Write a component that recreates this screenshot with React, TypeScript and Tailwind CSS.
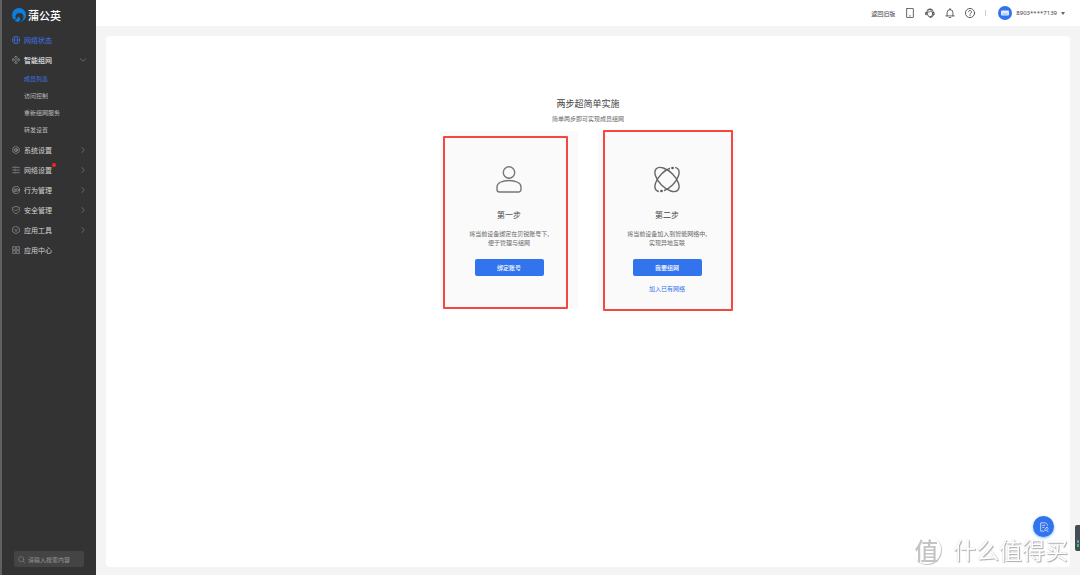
import React from "react";

type IconProps = { className?: string; children: React.ReactNode };

function Icon({ className = "size-2", children }: IconProps) {
  return (
    <svg viewBox="0 0 24 24" fill="none" stroke="currentColor" strokeWidth="2" strokeLinecap="round" strokeLinejoin="round" className={`shrink-0 ${className}`} aria-hidden="true">
      {children}
    </svg>
  );
}

const icons = {
  globe: (
    <>
      <circle cx="12" cy="12" r="11" />
      <ellipse cx="12" cy="12" rx="5" ry="11" />
      <path d="M1 12h22" />
    </>
  ),
  mesh: (
    <>
      <rect x="8.5" y="1" width="7" height="6" rx="2" />
      <rect x="8.5" y="17" width="7" height="6" rx="2" />
      <rect x="1" y="9" width="6" height="6" rx="2" />
      <rect x="17" y="9" width="6" height="6" rx="2" />
      <path d="M12 11v2" />
    </>
  ),
  system: (
    <>
      <path d="M12 1l9.500 5.500v11L12 23l-9.500-5.500v-11z" />
      <circle cx="12" cy="12" r="5" />
      <circle cx="12" cy="12" r="1" />
    </>
  ),
  network: <path d="M2 4h5M12 4h10M2 12h6M14 12h8M2 20h5M12 20h10M9 2v4M11 10v4M9 18v4" />,
  behavior: (
    <>
      <circle cx="12" cy="12" r="11" />
      <path d="M5 9h7M5 13h5M5 17h7" />
      <circle cx="16" cy="12" r="4" />
    </>
  ),
  shield: (
    <>
      <path d="M12 1c3 2 6 3 10 3v8c0 6-5 9-10 11C7 21 2 18 2 12V4c4 0 7-1 10-3z" />
      <path d="M7.500 11l4 4 6-6" />
    </>
  ),
  tool: (
    <>
      <path d="M12 1l10 5.500v11L12 23 2 17.500v-11z" />
      <path d="M8 10l4 3 4-3M12 13v4" />
    </>
  ),
  apps: (
    <>
      <path d="M2 10V2h8v8zM14 10V2h8v8z" />
      <path d="M2 22v-8h8v8zM14 22v-8h8v8z" />
    </>
  ),
};

const subMenu = ["成员列表", "访问控制", "重新组网服务", "转发设置"];

const menu = [
  { label: "系统设置", icon: icons.system, arrow: true },
  { label: "网络设置", icon: icons.network, arrow: true, dot: true },
  { label: "行为管理", icon: icons.behavior, arrow: true },
  { label: "安全管理", icon: icons.shield, arrow: true },
  { label: "应用工具", icon: icons.tool, arrow: true },
  { label: "应用中心", icon: icons.apps },
];

function Sidebar() {
  return (
    <aside className="flex w-24 shrink-0 flex-col border-l-2 border-[#606060] bg-[#333333] text-[#d2d2d2]">
      <div className="flex h-[30px] items-center gap-[2px] pl-[10px]">
        <svg viewBox="0 0 28 28" className="size-[14px] shrink-0" aria-hidden="true">
          <circle cx="14" cy="14" r="14" fill="#0b7fe0" />
          <path d="M14 28a8 8 0 0 0 6-3c2-2 3-4.500 3-7a8 8 0 0 0-16 0c0 1.500.4 3 1 4-2 0-4 .5-5.500 1.500L7 28z" fill="#333333" />
          <path d="M5 25c4-2 6.500-5 7-8 3 1 5 4 4 7-1 2.500-3 4-5 4z" fill="#0b7fe0" />
        </svg>
        <span className="text-[11px] leading-none font-medium text-white">蒲公英</span>
      </div>
      <nav className="text-[7px] leading-none">
        <a href="#" className="flex h-5 items-center gap-1 pl-[10px] text-[#3f74e8]">
          <Icon>{icons.globe}</Icon>
          网络状态
        </a>
        <a href="#" className="flex h-5 items-center gap-1 pr-[10px] pl-[10px] text-white">
          <Icon className="size-2 text-[#999999]">{icons.mesh}</Icon>
          <span className="flex-1">智能组网</span>
          <Icon className="size-[6px] text-[#999999]">
            <path d="M1 7l11 10L23 7" />
          </Icon>
        </a>
        <div className="pb-[2px] text-[6px]">
          {subMenu.map((label, i) => (
            <a key={label} href="#" className={`flex h-[17px] items-center pl-[22px] ${i === 0 ? "text-[#3f74e8]" : "text-[#bcbcbc]"}`}>
              {label}
            </a>
          ))}
        </div>
        {menu.map((item) => (
          <a key={item.label} href="#" className="flex h-5 items-center gap-1 pr-[10px] pl-[10px]">
            <Icon className="size-2 text-[#999999]">{item.icon}</Icon>
            <span className="relative">
              {item.label}
              {item.dot && <i className="absolute -top-1 -right-1 size-1 rounded-full bg-[#f5222d]" />}
            </span>
            {item.arrow && (
              <Icon className="ml-auto size-[6px] text-[#999999]">
                <path d="M8 2l9 10-9 10" />
              </Icon>
            )}
          </a>
        ))}
      </nav>
      <label className="mx-3 mt-auto mb-2 flex h-4 items-center gap-[3px] rounded-xs bg-[#444444] px-1 text-[#888888]">
        <Icon className="size-[7px]">
          <circle cx="11" cy="11" r="9" />
          <path d="M18 18l5 5" />
        </Icon>
        <input type="text" aria-label="搜索" placeholder="请输入搜索内容" className="h-4 w-full min-w-0 text-[6px] placeholder:text-[#999999] focus:outline-none" />
      </label>
    </aside>
  );
}

function Header() {
  return (
    <header className="flex h-[26px] shrink-0 items-center justify-end gap-[10px] bg-white pr-[15px] text-[6px] text-[#444444]">
      <a href="#">返回旧版</a>
      <button type="button" aria-label="手机端">
        <Icon className="size-[10px]">
          <rect x="4" y="1" width="16" height="22" rx="1" />
          <path d="M11 19h2" />
        </Icon>
      </button>
      <button type="button" aria-label="客服">
        <Icon className="size-[10px]">
          <path d="M4 10a8 8 0 0 1 16 0M8 5c2-2 6-2 8 0" />
          <path d="M2 11h2v5H2zM20 11h2v5h-2z" />
          <path d="M6 10c4 0 6-1 8-3 1 2 2 3 4 3v5a6 6 0 0 1-12 0zM20 17c-1 4-4 6-8 6" />
        </Icon>
      </button>
      <button type="button" aria-label="通知">
        <Icon className="size-[10px]">
          <path d="M2 19h20M5 19v-8a7 7 0 0 1 14 0v8M12 4V1M10 23h4" />
        </Icon>
      </button>
      <button type="button" aria-label="帮助">
        <Icon className="size-[10px]">
          <circle cx="12" cy="12" r="11" />
          <path d="M8.500 9a3.500 3.500 0 1 1 5.500 3c-1.500 1-2 1.500-2 3M12 18v.5" />
        </Icon>
      </button>
      <span className="h-[6px] w-px bg-[#cccccc]" />
      <button type="button" className="ml-[2px] flex items-center gap-1">
        <svg viewBox="0 0 28 28" className="size-[14px]" aria-hidden="true">
          <circle cx="14" cy="14" r="14" fill="#3273ee" />
          <rect x="6" y="9" width="16" height="10" rx="2" fill="#e4edff" />
          <path d="M9 16h10" stroke="#8db1f8" strokeWidth="2" />
        </svg>
        <span className="font-['Noto_Sans',sans-serif]">8903****7139</span>
        <svg viewBox="0 0 8 6" className="w-1" aria-hidden="true">
          <path d="M0 0h8L4 6z" fill="#666666" />
        </svg>
      </button>
    </header>
  );
}

type StepProps = { icon: React.ReactNode; title: string; lines: string[]; action: string; link?: string; frame: string };

function Step({ icon, title, lines, action, link, frame }: StepProps) {
  return (
    <section className="relative flex h-[178px] w-[138px] flex-col items-center bg-[#fafafa] pt-[34px] text-[6px] text-[#666666]">
      <div className={`pointer-events-none absolute rounded-[1px] border-2 border-[#f5473f] ${frame}`} />
      {icon}
      <h2 className="mt-4 text-[8px] leading-[12px] text-[#444444]">{title}</h2>
      <p className="mt-2 text-center leading-[9px]">
        {lines[0]}
        <br />
        {lines[1]}
      </p>
      <button type="button" className="mt-3 h-[17px] w-[69px] rounded-xs bg-[#3273ee] font-medium text-white">
        {action}
      </button>
      {link && (
        <a href="#" className="mt-2 leading-[9px] text-[#3273ee]">
          {link}
        </a>
      )}
    </section>
  );
}

function App() {
  return (
    <div className="flex min-h-screen bg-[#f4f4f4] font-['Noto_Sans_CJK_SC',sans-serif]">
      <Sidebar />
      <div className="flex min-w-0 flex-1 flex-col">
        <Header />
        <main className="m-[10px] mb-2 flex flex-1 flex-col items-center rounded-sm bg-white pt-[62px]">
          <h1 className="text-[9px] leading-[12px] text-[#444444]">两步超简单实施</h1>
          <p className="mt-1 text-[6px] leading-[9px] text-[#666666]">简单两步即可实现成员组网</p>
          <div className="mt-2 flex gap-5">
            <Step
              frame="top-[5px] right-[10px] bottom-0 left-[3px]"
              icon={
                <svg viewBox="0 0 28 28" className="size-7" fill="none" stroke="#777777" strokeWidth="1.400" aria-hidden="true">
                  <circle cx="14" cy="7.5" r="5.700" />
                  <path d="M4.500 27h19a2.500 2.500 0 0 0 2.500-2.500V22c0-4-5-6.500-12-6.500S2 18 2 22v2.500A2.500 2.500 0 0 0 4.500 27z" />
                </svg>
              }
              title="第一步"
              lines={["将当前设备绑定在贝锐账号下,", "便于管理与组网"]}
              action="绑定账号"
            />
            <Step
              frame="-top-px right-[3px] -bottom-[2px] left-[5px]"
              icon={
                <svg viewBox="0 0 28 28" className="size-7" fill="none" stroke="#666666" strokeWidth="1.400" aria-hidden="true">
                  <ellipse cx="14" cy="14.5" rx="15.200" ry="7.800" transform="rotate(-45 14 14.5)" />
                  <circle cx="19.5" cy="2.8" r="2.600" fill="#fafafa" stroke="none" />
                  <circle cx="8.5" cy="26.2" r="2.600" fill="#fafafa" stroke="none" />
                  <ellipse cx="14" cy="14.5" rx="15.200" ry="7.800" transform="rotate(45 14 14.5)" />
                  <circle cx="19.5" cy="3" r="1.300" fill="#555555" stroke="none" />
                  <circle cx="8.5" cy="26" r="1.300" fill="#555555" stroke="none" />
                </svg>
              }
              title="第二步"
              lines={["将当前设备加入到智能网络中,", "实现异地互联"]}
              action="我要组网"
              link="加入已有网络"
            />
          </div>
        </main>
      </div>

      <button type="button" aria-label="反馈" className="fixed right-[26px] bottom-[38px] flex size-[21px] items-center justify-center rounded-full bg-[#3273ee] text-[#d5e3ff] shadow-sm shadow-blue-300">
        <Icon className="size-[10px]">
          <path d="M20 8V6l-4-4H4v20h8M9 8h5M9 13h3" />
          <path d="M14 18l5-6 3 3-5 6zM20 22h2" />
        </Icon>
      </button>
      <div className="fixed right-0 bottom-6 flex h-[26px] w-[5px] flex-col items-center justify-end gap-px rounded-l-xs bg-[#454c55] pb-1">
        <i className="h-[3px] w-[2px] bg-[#4fa59a]" />
        <i className="h-[3px] w-[2px] bg-[#45b36b]" />
      </div>
      <div className="pointer-events-none fixed right-3 bottom-[11px] flex items-center gap-3 text-white [text-shadow:1px_1px_1px_#aaaaaa,0_0_1px_#bbbbbb]">
        <span className="flex size-[29px] items-center justify-center rounded-full text-[24px] leading-none font-medium text-[#c4c4c4] shadow-[1px_1px_1px_#c4c4c4] [text-shadow:none]">值</span>
        <span className="text-[23px] leading-none">什么值得买</span>
      </div>
    </div>
  );
}

export default App;
